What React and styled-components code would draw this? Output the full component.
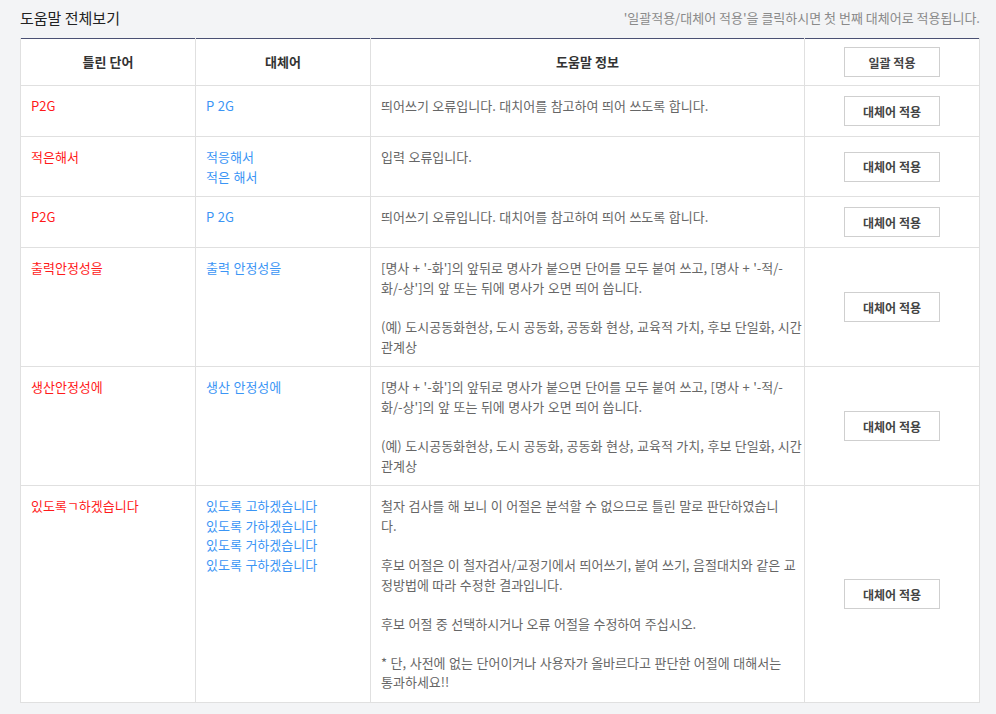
import styled, { createGlobalStyle } from "styled-components";

const GlobalStyle = createGlobalStyle`
  body {
    margin: 0;
    background: #f3f4f6;
    font-family: "Noto Sans CJK KR", "Noto Sans", sans-serif;
  }
`;

// help text is kept as the lines shown in the original panel
const spacingHelp = [
  [
    "[명사 + '-화']의 앞뒤로 명사가 붙으면 단어를 모두 붙여 쓰고, [명사 + '-적/-",
    "화/-상']의 앞 또는 뒤에 명사가 오면 띄어 씁니다.",
  ],
  ["(예) 도시공동화현상, 도시 공동화, 공동화 현상, 교육적 가치, 후보 단일화, 시간", "관계상"],
];

const rows = [
  {
    wrong: "P2G",
    fixes: ["P 2G"],
    help: [["띄어쓰기 오류입니다. 대치어를 참고하여 띄어 쓰도록 합니다."]],
  },
  {
    wrong: "적은해서",
    fixes: ["적응해서", "적은 해서"],
    help: [["입력 오류입니다."]],
  },
  {
    wrong: "P2G",
    fixes: ["P 2G"],
    help: [["띄어쓰기 오류입니다. 대치어를 참고하여 띄어 쓰도록 합니다."]],
  },
  { wrong: "출력안정성을", fixes: ["출력 안정성을"], help: spacingHelp },
  { wrong: "생산안정성에", fixes: ["생산 안정성에"], help: spacingHelp },
  {
    wrong: "있도록ㄱ하겠습니다",
    fixes: ["있도록 고하겠습니다", "있도록 가하겠습니다", "있도록 거하겠습니다", "있도록 구하겠습니다"],
    help: [
      ["철자 검사를 해 보니 이 어절은 분석할 수 없으므로 틀린 말로 판단하였습니", "다."],
      ["후보 어절은 이 철자검사/교정기에서 띄어쓰기, 붙여 쓰기, 음절대치와 같은 교", "정방법에 따라 수정한 결과입니다."],
      ["후보 어절 중 선택하시거나 오류 어절을 수정하여 주십시오."],
      ["* 단, 사전에 없는 단어이거나 사용자가 올바르다고 판단한 어절에 대해서는", "통과하세요!!"],
    ],
  },
];

const Page = styled.div`
  padding: 0 16px 12px 20px;
`;

const TitleBar = styled.div`
  display: flex;
  justify-content: space-between;
  align-items: center;
  height: 34px;
  margin-bottom: 4px;
`;

const Title = styled.h2`
  margin: 0;
  font-size: 15px;
  font-weight: 400;
  color: #222;
`;

const Hint = styled.span`
  font-size: 13px;
  color: #8a8a8a;
`;

const Table = styled.table`
  width: 100%;
  border-collapse: collapse;
  table-layout: fixed;
  background: #fff;
  border-top: 1px solid #4a5073;
  font-size: 13px;
  line-height: 19.6px;
`;

const Th = styled.th`
  border: 1px solid #e0e0e0;
  border-top: none;
  padding: 8px 10px;
  height: 30px;
  font-weight: 700;
  color: #333;
  text-align: center;
`;

const Td = styled.td`
  border: 1px solid #e0e0e0;
  padding: 10px 10px;
  vertical-align: ${(p) => (p.$middle ? "middle" : "top")};
  text-align: ${(p) => (p.$middle ? "center" : "left")};
  color: ${(p) => p.$color || "#666"};
  word-spacing: 0.6px;
`;

const Para = styled.div`
  & + & {
    margin-top: 19.6px;
  }
`;

const Line = styled.div`
  white-space: nowrap;
`;

const Button = styled.button`
  width: 96px;
  height: 30px;
  background: #fff;
  border: 1px solid #cfcfcf;
  font-family: inherit;
  font-size: 12px;
  font-weight: 700;
  color: #444;
  cursor: pointer;
`;

export default function App() {
  return (
    <>
      <GlobalStyle />
      <Page>
        <TitleBar>
          <Title>도움말 전체보기</Title>
          <Hint>'일괄적용/대체어 적용'을 클릭하시면 첫 번째 대체어로 적용됩니다.</Hint>
        </TitleBar>
        <Table>
          <colgroup>
            <col style={{ width: 175 }} />
            <col style={{ width: 175 }} />
            <col />
            <col style={{ width: 175 }} />
          </colgroup>
          <thead>
            <tr>
              <Th>틀린 단어</Th>
              <Th>대체어</Th>
              <Th>도움말 정보</Th>
              <Th>
                <Button>일괄 적용</Button>
              </Th>
            </tr>
          </thead>
          <tbody>
            {rows.map((row, i) => (
              <tr key={i}>
                <Td $color="#ff1a1a">{row.wrong}</Td>
                <Td $color="#3b95f5">
                  {row.fixes.map((f) => (
                    <Line key={f}>{f}</Line>
                  ))}
                </Td>
                <Td>
                  {row.help.map((para, j) => (
                    <Para key={j}>
                      {para.map((l, k) => (
                        <Line key={k}>{l}</Line>
                      ))}
                    </Para>
                  ))}
                </Td>
                <Td $middle>
                  <Button>대체어 적용</Button>
                </Td>
              </tr>
            ))}
          </tbody>
        </Table>
      </Page>
    </>
  );
}
